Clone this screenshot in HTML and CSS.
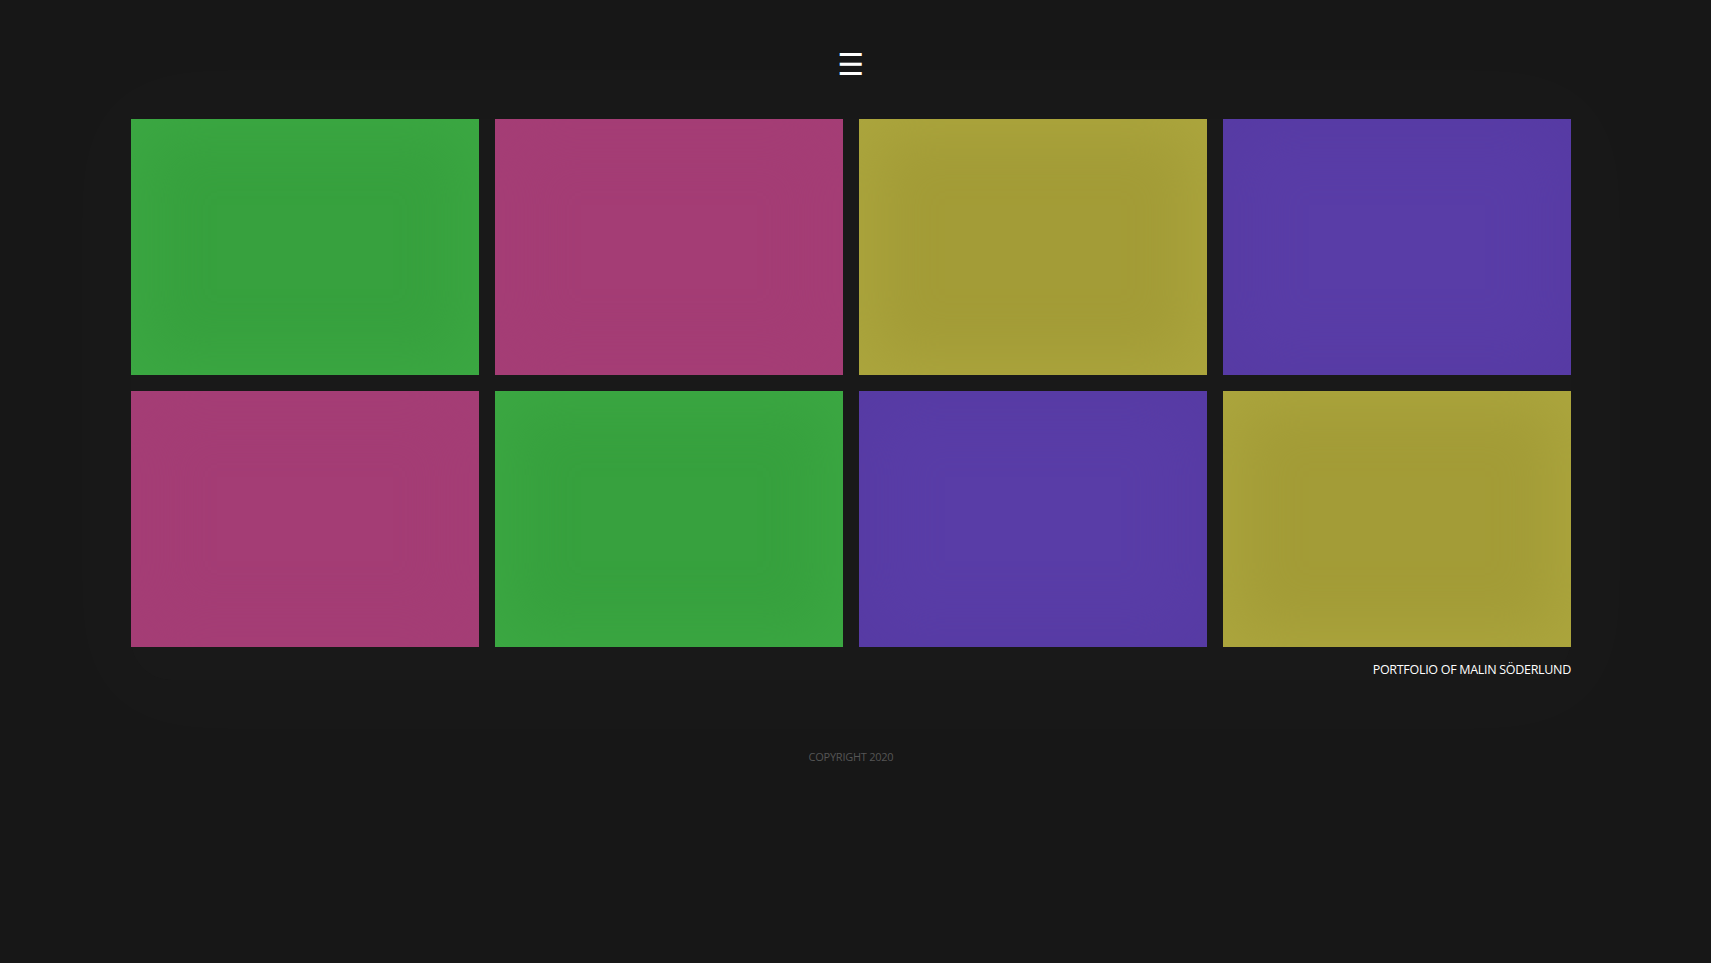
FILE: index.html
```html
<!DOCTYPE html>
<html lang="en">
<head>
<meta charset="utf-8">
<title>Portfolio of Malin Söderlund</title>
<link rel="stylesheet" href="styles.css">
</head>
<body>
<div class="page">
  <header class="header">
    <button class="menu" aria-label="Menu">☰</button>
  </header>
  <main class="main">
    <section class="grid">
      <a class="tile green" href="#"></a>
      <a class="tile pink" href="#"></a>
      <a class="tile olive" href="#"></a>
      <a class="tile purple" href="#"></a>
      <a class="tile pink" href="#"></a>
      <a class="tile green" href="#"></a>
      <a class="tile purple" href="#"></a>
      <a class="tile olive" href="#"></a>
    </section>
    <p class="owner">PORTFOLIO OF MALIN SÖDERLUND</p>
  </main>
  <footer class="footer">COPYRIGHT 2020</footer>
</div>
</body>
</html>
```
FILE: styles.css
```css
html, body {
  margin: 0;
  background: #171717;
  height: 100%;
}
body {
  font-family: "Open Sans", "Noto Sans", sans-serif;
  padding-right: 9px;
  overflow: hidden;
}
.page {
  width: 1440px;
  margin: 0 auto;
}
.header {
  height: 119px;
  display: flex;
  justify-content: center;
  align-items: flex-start;
}
.menu {
  margin-top: 40px;
  background: none;
  border: 0;
  padding: 0;
  color: #ffffff;
  font-family: "DejaVu Sans", sans-serif;
  font-size: 30px;
  line-height: 50px;
  cursor: pointer;
}
.main {
  box-shadow: 0 0 100px 70px rgba(255, 255, 255, 0.012);
  background: rgba(255, 255, 255, 0.012);
  border-radius: 40px;
}
.grid {
  display: grid;
  grid-template-columns: repeat(4, 348px);
  grid-auto-rows: 256px;
  gap: 16px;
}
.tile {
  display: block;
}
.green {
  background: #37a13e;
  box-shadow: inset 0 0 60px 14px #3ca843;
}
.pink {
  background: #a43d75;
  box-shadow: inset 0 0 60px 14px #a53e76;
}
.olive {
  background: #a39c37;
  box-shadow: inset 0 0 60px 14px #aca63e;
}
.purple {
  background: #593da7;
  box-shadow: inset 0 0 60px 14px #573ba4;
}
.owner {
  margin: 0;
  padding: 13px 0 0;
  text-align: right;
  color: #ffffff;
  font-size: 12.5px;
  line-height: 20px;
  letter-spacing: -0.3px;
}
.footer {
  margin-top: 69px;
  text-align: center;
  color: #555555;
  font-size: 11px;
  line-height: 16px;
  letter-spacing: -0.25px;
}
```
